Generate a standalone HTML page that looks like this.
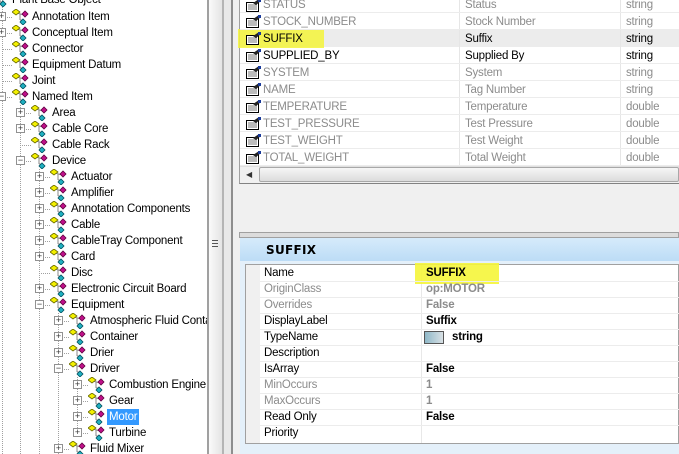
<!DOCTYPE html>
<html><head><meta charset="utf-8"><style>
*{margin:0;padding:0;box-sizing:border-box}
body{width:679px;height:454px;overflow:hidden;background:#f0f0f0;font-family:"Liberation Sans",sans-serif;font-size:11px;position:relative}
.a{position:absolute;white-space:nowrap}
#tree{position:absolute;left:0;top:0;width:208px;height:454px;background:#fff;overflow:hidden}
.t{position:absolute;height:16px;line-height:16px;color:#000;white-space:nowrap;font-size:11.5px;letter-spacing:-0.2px}
.ic{position:absolute;width:18px;height:16px}
.ex{position:absolute;width:9px;height:9px;border:1px solid #919191;background:#fff;font-size:9px;line-height:7px;text-align:center;color:#333}
.vl{position:absolute;width:1px;border-left:1px dotted #a0a0a0}
.hl{position:absolute;height:1px;border-top:1px dotted #a0a0a0}
.g{position:absolute;height:17px;line-height:17px;color:#8c8c8c;white-space:nowrap;font-size:11.5px;letter-spacing:-0.2px}
.b{color:#000}
.ti{position:absolute;width:16px;height:13px}
.p{position:absolute;height:16px;line-height:16px;white-space:nowrap;font-size:11.5px;letter-spacing:-0.2px}
</style></head><body>
<svg width="0" height="0" style="position:absolute">
<defs>
<g id="ti">
<line x1="5" y1="4" x2="12" y2="6" stroke="#888" stroke-width="1"/>
<line x1="8" y1="5" x2="8" y2="11" stroke="#888"/>
<line x1="8" y1="11" x2="12" y2="11" stroke="#888"/>
<polygon points="0,3 4,0 8,3 4,6" fill="#f3f000" stroke="#6a6a00" stroke-width=".8"/>
<polygon points="10,5 13,2 16,5 13,8" fill="#c0108a" stroke="#600040" stroke-width=".8"/>
<polygon points="8,13 11,10 14,13 11,16" fill="#20b0c0" stroke="#005060" stroke-width=".8"/>
</g>
<g id="gi">
<rect x="1.5" y="3.5" width="12" height="9" fill="#fff" stroke="#000"/>
<line x1="3" y1="6" x2="12" y2="6" stroke="#777"/>
<line x1="3" y1="8" x2="12" y2="8" stroke="#777"/>
<line x1="3" y1="10" x2="12" y2="10" stroke="#777"/>
<polygon points="8,4 14,0 16,2 11,6" fill="#222"/>
<rect x="13" y="0" width="3" height="3" fill="#1a3a9a"/>
</g>
</defs></svg>

<div id="tree">
<div class="vl" style="left:2px;top:0;height:454px"></div>
<div class="vl" style="left:20px;top:105px;height:349px"></div>
<div class="vl" style="left:39px;top:169px;height:285px"></div>
<div class="vl" style="left:58px;top:313px;height:141px"></div>
<div class="vl" style="left:77px;top:377px;height:57px"></div>

<svg class="ic" style="left:-8px;top:-9px"><use href="#ti"/></svg><div class="t" style="left:12px;top:-8px">Plant Base Object</div>
<div class="hl" style="left:2px;top:17px;width:10px"></div><div class="ex" style="left:-3px;top:12px">+</div><svg class="ic" style="left:12px;top:9px"><use href="#ti"/></svg><div class="t" style="left:32px;top:9px">Annotation Item</div>
<div class="hl" style="left:2px;top:33px;width:10px"></div><div class="ex" style="left:-3px;top:28px">+</div><svg class="ic" style="left:12px;top:25px"><use href="#ti"/></svg><div class="t" style="left:32px;top:25px">Conceptual Item</div>
<div class="hl" style="left:2px;top:49px;width:10px"></div><svg class="ic" style="left:12px;top:41px"><use href="#ti"/></svg><div class="t" style="left:32px;top:41px">Connector</div>
<div class="hl" style="left:2px;top:65px;width:10px"></div><svg class="ic" style="left:12px;top:57px"><use href="#ti"/></svg><div class="t" style="left:32px;top:57px">Equipment Datum</div>
<div class="hl" style="left:2px;top:81px;width:10px"></div><svg class="ic" style="left:12px;top:73px"><use href="#ti"/></svg><div class="t" style="left:32px;top:73px">Joint</div>
<div class="hl" style="left:2px;top:97px;width:10px"></div><div class="ex" style="left:-3px;top:92px">−</div><svg class="ic" style="left:12px;top:89px"><use href="#ti"/></svg><div class="t" style="left:32px;top:89px">Named Item</div>
<div class="hl" style="left:20px;top:113px;width:11px"></div><div class="ex" style="left:16px;top:108px">+</div><svg class="ic" style="left:31px;top:105px"><use href="#ti"/></svg><div class="t" style="left:52px;top:105px">Area</div>
<div class="hl" style="left:20px;top:129px;width:11px"></div><div class="ex" style="left:16px;top:124px">+</div><svg class="ic" style="left:31px;top:121px"><use href="#ti"/></svg><div class="t" style="left:52px;top:121px">Cable Core</div>
<div class="hl" style="left:20px;top:145px;width:11px"></div><svg class="ic" style="left:31px;top:137px"><use href="#ti"/></svg><div class="t" style="left:52px;top:137px">Cable Rack</div>
<div class="hl" style="left:20px;top:161px;width:11px"></div><div class="ex" style="left:16px;top:156px">−</div><svg class="ic" style="left:31px;top:153px"><use href="#ti"/></svg><div class="t" style="left:52px;top:153px">Device</div>
<div class="hl" style="left:39px;top:177px;width:11px"></div><div class="ex" style="left:35px;top:172px">+</div><svg class="ic" style="left:50px;top:169px"><use href="#ti"/></svg><div class="t" style="left:71px;top:169px">Actuator</div>
<div class="hl" style="left:39px;top:193px;width:11px"></div><div class="ex" style="left:35px;top:188px">+</div><svg class="ic" style="left:50px;top:185px"><use href="#ti"/></svg><div class="t" style="left:71px;top:185px">Amplifier</div>
<div class="hl" style="left:39px;top:209px;width:11px"></div><div class="ex" style="left:35px;top:204px">+</div><svg class="ic" style="left:50px;top:201px"><use href="#ti"/></svg><div class="t" style="left:71px;top:201px">Annotation Components</div>
<div class="hl" style="left:39px;top:225px;width:11px"></div><div class="ex" style="left:35px;top:220px">+</div><svg class="ic" style="left:50px;top:217px"><use href="#ti"/></svg><div class="t" style="left:71px;top:217px">Cable</div>
<div class="hl" style="left:39px;top:241px;width:11px"></div><div class="ex" style="left:35px;top:236px">+</div><svg class="ic" style="left:50px;top:233px"><use href="#ti"/></svg><div class="t" style="left:71px;top:233px">CableTray Component</div>
<div class="hl" style="left:39px;top:257px;width:11px"></div><div class="ex" style="left:35px;top:252px">+</div><svg class="ic" style="left:50px;top:249px"><use href="#ti"/></svg><div class="t" style="left:71px;top:249px">Card</div>
<div class="hl" style="left:39px;top:273px;width:11px"></div><svg class="ic" style="left:50px;top:265px"><use href="#ti"/></svg><div class="t" style="left:71px;top:265px">Disc</div>
<div class="hl" style="left:39px;top:289px;width:11px"></div><div class="ex" style="left:35px;top:284px">+</div><svg class="ic" style="left:50px;top:281px"><use href="#ti"/></svg><div class="t" style="left:71px;top:281px">Electronic Circuit Board</div>
<div class="hl" style="left:39px;top:305px;width:11px"></div><div class="ex" style="left:35px;top:300px">−</div><svg class="ic" style="left:50px;top:297px"><use href="#ti"/></svg><div class="t" style="left:71px;top:297px">Equipment</div>
<div class="hl" style="left:58px;top:321px;width:11px"></div><div class="ex" style="left:54px;top:316px">+</div><svg class="ic" style="left:69px;top:313px"><use href="#ti"/></svg><div class="t" style="left:90px;top:313px">Atmospheric Fluid Contai</div>
<div class="hl" style="left:58px;top:337px;width:11px"></div><div class="ex" style="left:54px;top:332px">+</div><svg class="ic" style="left:69px;top:329px"><use href="#ti"/></svg><div class="t" style="left:90px;top:329px">Container</div>
<div class="hl" style="left:58px;top:353px;width:11px"></div><div class="ex" style="left:54px;top:348px">+</div><svg class="ic" style="left:69px;top:345px"><use href="#ti"/></svg><div class="t" style="left:90px;top:345px">Drier</div>
<div class="hl" style="left:58px;top:369px;width:11px"></div><div class="ex" style="left:54px;top:364px">−</div><svg class="ic" style="left:69px;top:361px"><use href="#ti"/></svg><div class="t" style="left:90px;top:361px">Driver</div>
<div class="hl" style="left:77px;top:385px;width:11px"></div><div class="ex" style="left:73px;top:380px">+</div><svg class="ic" style="left:88px;top:377px"><use href="#ti"/></svg><div class="t" style="left:109px;top:377px">Combustion Engine</div>
<div class="hl" style="left:77px;top:401px;width:11px"></div><div class="ex" style="left:73px;top:396px">+</div><svg class="ic" style="left:88px;top:393px"><use href="#ti"/></svg><div class="t" style="left:109px;top:393px">Gear</div>
<div class="hl" style="left:77px;top:417px;width:11px"></div><div class="ex" style="left:73px;top:412px">+</div><svg class="ic" style="left:88px;top:409px"><use href="#ti"/></svg><div class="t" style="left:107px;top:409px;background:#3399ff;color:#fff;padding:0 2px">Motor</div>
<div class="hl" style="left:77px;top:433px;width:11px"></div><div class="ex" style="left:73px;top:428px">+</div><svg class="ic" style="left:88px;top:425px"><use href="#ti"/></svg><div class="t" style="left:109px;top:425px">Turbine</div>
<div class="hl" style="left:58px;top:449px;width:11px"></div><div class="ex" style="left:54px;top:444px">+</div><svg class="ic" style="left:69px;top:441px"><use href="#ti"/></svg><div class="t" style="left:90px;top:441px">Fluid Mixer</div>
</div>

<div class="a" style="left:207px;top:0;width:2px;height:454px;background:#a0a0a0"></div>
<div class="a" style="left:209px;top:0;width:13px;height:454px;background:linear-gradient(90deg,#fafafa,#e4e4e4)"></div>
<div class="a" style="left:222px;top:0;width:2px;height:454px;background:#b4b4b4"></div>
<div class="a" style="left:224px;top:0;width:7px;height:454px;background:#e8e8e8"></div>
<div class="a" style="left:231px;top:0;width:2px;height:454px;background:#8e8e8e"></div>
<div class="a" style="left:212px;top:240px;width:6px;height:7px;border-top:1px solid #555;border-bottom:1px solid #555"><div style="margin-top:2px;border-top:1px solid #555"></div></div>

<div class="a" style="left:239px;top:0;width:440px;height:184px;background:#fff;border-left:1px solid #a0a0a0;border-bottom:1px solid #828282"></div>
<div class="a" style="left:240px;top:30px;width:439px;height:17px;background:#ececec"></div>
<div class="a" style="left:238px;top:29px;width:86px;height:19px;background:#f5f53a;opacity:.85"></div>
<div class="a" style="left:459px;top:0;width:1px;height:166px;background:#e6e6e6"></div>
<div class="a" style="left:620px;top:0;width:1px;height:166px;background:#e6e6e6"></div>
<div class="a" style="left:240px;top:12px;width:439px;height:1px;background:#ececec;box-shadow:0 17px #ececec,0 51px #ececec,0 68px #ececec,0 85px #ececec,0 102px #ececec,0 119px #ececec,0 136px #ececec,0 153px #ececec"></div>
<svg class="ti a" style="left:245px;top:-1px"><use href="#gi"/></svg><div class="g" style="left:263px;top:-3px">STATUS</div><div class="g" style="left:465px;top:-3px">Status</div><div class="g" style="left:626px;top:-3px">string</div>
<svg class="ti a" style="left:245px;top:15px"><use href="#gi"/></svg><div class="g" style="left:263px;top:14px">STOCK_NUMBER</div><div class="g" style="left:465px;top:14px">Stock Number</div><div class="g" style="left:626px;top:14px">string</div>
<svg class="ti a" style="left:245px;top:32px"><use href="#gi"/></svg><div class="g b" style="left:263px;top:31px">SUFFIX</div><div class="g b" style="left:465px;top:31px">Suffix</div><div class="g b" style="left:626px;top:31px">string</div>
<svg class="ti a" style="left:245px;top:49px"><use href="#gi"/></svg><div class="g b" style="left:263px;top:48px">SUPPLIED_BY</div><div class="g b" style="left:465px;top:48px">Supplied By</div><div class="g b" style="left:626px;top:48px">string</div>
<svg class="ti a" style="left:245px;top:66px"><use href="#gi"/></svg><div class="g" style="left:263px;top:65px">SYSTEM</div><div class="g" style="left:465px;top:65px">System</div><div class="g" style="left:626px;top:65px">string</div>
<svg class="ti a" style="left:245px;top:83px"><use href="#gi"/></svg><div class="g" style="left:263px;top:82px">NAME</div><div class="g" style="left:465px;top:82px">Tag Number</div><div class="g" style="left:626px;top:82px">string</div>
<svg class="ti a" style="left:245px;top:100px"><use href="#gi"/></svg><div class="g" style="left:263px;top:99px">TEMPERATURE</div><div class="g" style="left:465px;top:99px">Temperature</div><div class="g" style="left:626px;top:99px">double</div>
<svg class="ti a" style="left:245px;top:117px"><use href="#gi"/></svg><div class="g" style="left:263px;top:116px">TEST_PRESSURE</div><div class="g" style="left:465px;top:116px">Test Pressure</div><div class="g" style="left:626px;top:116px">double</div>
<svg class="ti a" style="left:245px;top:134px"><use href="#gi"/></svg><div class="g" style="left:263px;top:133px">TEST_WEIGHT</div><div class="g" style="left:465px;top:133px">Test Weight</div><div class="g" style="left:626px;top:133px">double</div>
<svg class="ti a" style="left:245px;top:151px"><use href="#gi"/></svg><div class="g" style="left:263px;top:150px">TOTAL_WEIGHT</div><div class="g" style="left:465px;top:150px">Total Weight</div><div class="g" style="left:626px;top:150px">double</div>
<div class="a" style="left:240px;top:166px;width:439px;height:17px;background:#f0f0f0;border-top:1px solid #e0e0e0"></div>
<div class="a" style="left:246px;top:170px;font-size:8px;color:#333">◀</div>
<div class="a" style="left:259px;top:167px;width:420px;height:15px;background:linear-gradient(#f6f6f6,#dcdcdc);border:1px solid #a8a8a8;border-radius:2px"></div>

<div class="a" style="left:239px;top:232px;width:440px;height:6px;background:#dcdcdc;border:1px solid #a0a0a0"></div>
<div class="a" style="left:240px;top:238px;width:439px;height:216px;background:#e4f0fa"></div>
<div class="a" style="left:240px;top:238px;width:439px;height:23px;background:linear-gradient(#d6ebfb,#bcdcf6)"></div>
<div class="a" style="left:266px;top:243px;font-weight:bold;font-size:12px;font-family:'DejaVu Sans',sans-serif;letter-spacing:.3px">SUFFIX</div>
<div class="a" style="left:245px;top:264px;width:434px;height:180px;background:#fff;border:1px solid #a0a0a0"></div>
<div class="a" style="left:246px;top:265px;width:14px;height:178px;background:#f0f0f0"></div>
<div class="a" style="left:421px;top:265px;width:1px;height:178px;background:#e8e8e8"></div>
<div class="a" style="left:415px;top:263px;width:84px;height:21px;background:#f5f53a;opacity:.9"></div>
<div class="a" style="left:260px;top:281px;width:419px;height:1px;background:#ececec;box-shadow:0 16px #ececec,0 32px #ececec,0 48px #ececec,0 64px #ececec,0 80px #ececec,0 96px #ececec,0 112px #ececec,0 128px #ececec,0 144px #ececec"></div>
<div class="p" style="left:264px;top:265px">Name</div><div class="p" style="left:426px;top:265px;font-weight:bold">SUFFIX</div>
<div class="p" style="left:264px;top:281px;color:#8c8c8c">OriginClass</div><div class="p" style="left:426px;top:281px;font-weight:bold;color:#8c8c8c">op:MOTOR</div>
<div class="p" style="left:264px;top:297px;color:#8c8c8c">Overrides</div><div class="p" style="left:426px;top:297px;font-weight:bold;color:#8c8c8c">False</div>
<div class="p" style="left:264px;top:313px">DisplayLabel</div><div class="p" style="left:426px;top:313px;font-weight:bold">Suffix</div>
<div class="p" style="left:264px;top:329px">TypeName</div><div class="a" style="left:424px;top:331px;width:20px;height:13px;border:1px solid #555;background:linear-gradient(90deg,#8fb8c8,#d8e0e4)"></div><div class="p" style="left:452px;top:329px;font-weight:bold">string</div>
<div class="p" style="left:264px;top:345px">Description</div>
<div class="p" style="left:264px;top:361px">IsArray</div><div class="p" style="left:426px;top:361px;font-weight:bold">False</div>
<div class="p" style="left:264px;top:377px;color:#8c8c8c">MinOccurs</div><div class="p" style="left:426px;top:377px;font-weight:bold;color:#8c8c8c">1</div>
<div class="p" style="left:264px;top:393px;color:#8c8c8c">MaxOccurs</div><div class="p" style="left:426px;top:393px;font-weight:bold;color:#8c8c8c">1</div>
<div class="p" style="left:264px;top:409px">Read Only</div><div class="p" style="left:426px;top:409px;font-weight:bold">False</div>
<div class="p" style="left:264px;top:425px">Priority</div>
</body></html>
